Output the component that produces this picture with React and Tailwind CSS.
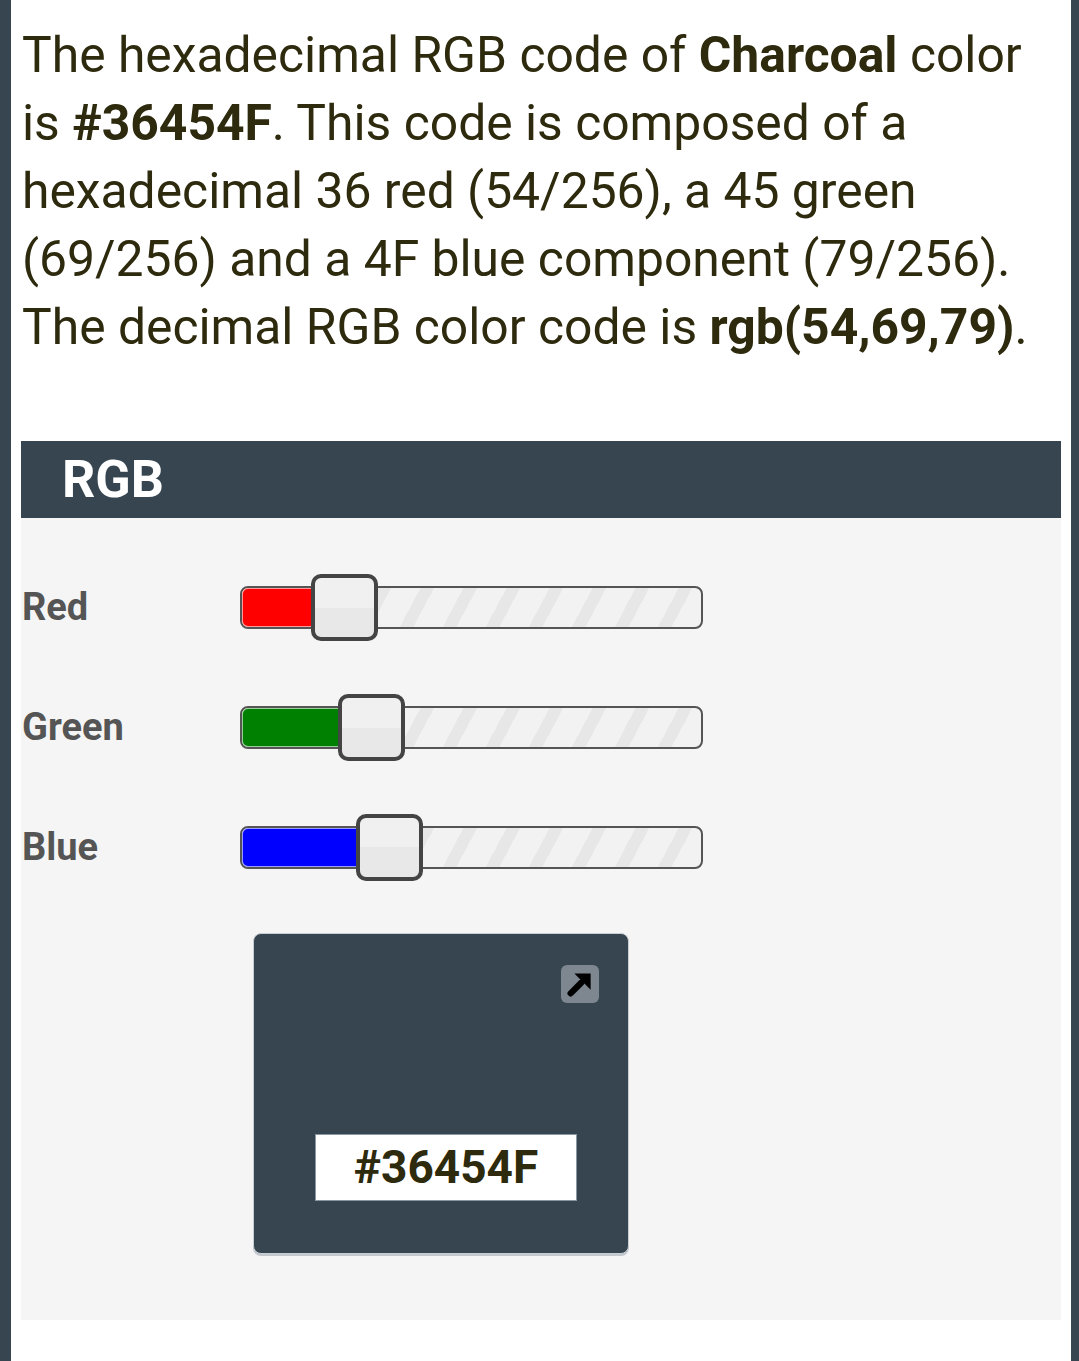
const channels = [
  { name: "Red", value: 54, fill: "bg-[#ff0000]", thumb: "left-[69px]", width: "w-[76px]" },
  { name: "Green", value: 69, fill: "bg-[#008000]", thumb: "left-[96px]", width: "w-[103px]" },
  { name: "Blue", value: 79, fill: "bg-[#0000ff]", thumb: "left-[114px]", width: "w-[121px]" },
];

function Slider({ channel }) {
  return (
    <div className="relative h-[43px] w-[463px] rounded-[8px] border-2 border-[#555] bg-[repeating-linear-gradient(-62deg,#f2f2f2_0px,#f2f2f2_26px,#e7e7e7_26px,#e7e7e7_38px)]">
      <div className={`h-full ${channel.width} ${channel.fill} rounded-l-[6px] border border-white/60`} />
      <div
        className={`absolute top-[-14px] ${channel.thumb} h-[67px] w-[67px] rounded-[10px] border-4 border-[#444] bg-[linear-gradient(#f0f0f0_0%,#f0f0f0_50%,#e8e8e8_50%,#e8e8e8_100%)]`}
      />
    </div>
  );
}

export default function App() {
  return (
    <div className="min-h-[1361px] bg-[#36454F] pl-[11px] pr-[8px] font-['Roboto',sans-serif]">
      <div className="min-h-[1361px] bg-white pt-[21px]">
        <p className="pl-[11px] pr-[8px] text-[49.8px] leading-[68px] text-[#2d2a0e]">
          The hexadecimal RGB code of <b>Charcoal</b> color is <b>#36454F</b>. This code is composed of a hexadecimal 36 red (54/256), a 45 green (69/256) and a 4F blue component (79/256). The decimal RGB color code is <b>rgb(54,69,79)</b>.
        </p>

        <div className="mx-[10px] mt-[80px]">
          <div className="flex h-[77px] items-center bg-[#36454F] pl-[41px]">
            <h2 className="text-[52px] font-bold text-white">RGB</h2>
          </div>

          <div className="h-[802px] bg-[#f5f5f5] pt-[68px]">
            <div className="flex flex-col gap-[77px]">
              {channels.map((c) => (
                <div key={c.name} className="flex items-center">
                  <span className="w-[219px] pl-[1px] text-[38px] leading-[43px] font-bold text-[#555]">{c.name}</span>
                  <Slider channel={c} />
                </div>
              ))}
            </div>

            <div className="relative ml-[232px] mt-[64px] h-[321px] w-[376px] rounded-[8px] border border-[#c9ced3] bg-[#36454F] shadow-[0_2px_0_#c4c9d0]">
              <div className="absolute right-[29px] top-[31px] flex h-[38px] w-[38px] items-center justify-center rounded-[6px] bg-[#7e878f]">
                <svg width="30" height="30" viewBox="0 0 24 24">
                  <path d="M4.5 19.5 L13 11" stroke="#000" strokeWidth="5" strokeLinecap="round" />
                  <path d="M7.5 3.5 H20.5 V16.5 Z" fill="#000" />
                </svg>
              </div>
              <div className="absolute left-[61px] top-[200px] flex h-[67px] w-[262px] items-center justify-center border border-[#8a96a0] bg-white">
                <span className="text-[46px] font-bold text-[#2d2a0e]">#36454F</span>
              </div>
            </div>
          </div>
        </div>
      </div>
    </div>
  );
}
